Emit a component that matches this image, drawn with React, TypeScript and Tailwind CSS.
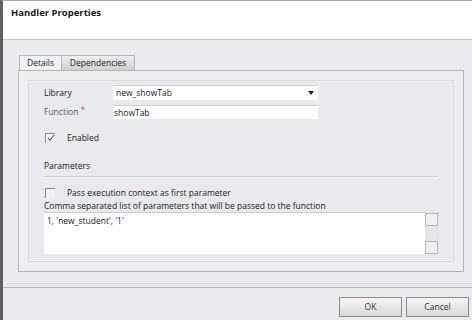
const font = { fontFamily: '"Open Sans", "Noto Sans", sans-serif' };

const Check = ({ checked }: { checked?: boolean }) => (
  <div className="w-[10px] h-[10px] border-l border-t border-[#8a8a8a] bg-[#f3f3f3] flex items-center justify-center">
    {checked && (
      <svg width="8" height="8" viewBox="0 0 8 8">
        <path d="M1 4 L3 6.5 L7 1" fill="none" stroke="#333" strokeWidth="1" />
      </svg>
    )}
  </div>
);

export default function App() {
  return (
    <div
      className="w-[472px] h-[320px] flex flex-col bg-[#e9ebee] border-l-[3px] border-l-[#5f5f5f] border-t border-t-[#a5a5a5] text-[8.5px] leading-[12px] text-[#222]"
      style={font}
    >
      {/* Header */}
      <div className="h-[39px] shrink-0 bg-white border-b border-[#c5c8cc] pl-[8px] pt-[5px]">
        <span className="text-[9.5px] leading-[13px] font-bold text-[#1a1a1a]">Handler Properties</span>
      </div>

      {/* Body */}
      <div className="flex flex-col pl-[15px] pr-[8px] pt-[15px]">
        {/* Tabs */}
        <div className="flex h-[15px] ml-[1px]">
          <div className="w-[43px] h-[15px] bg-[#f1f2f4] border border-b-0 border-[#b4b7bb] flex items-center justify-center">
            Details
          </div>
          <div className="w-[73px] h-[15px] bg-gradient-to-b from-[#f0f0f0] to-[#cfd0d2] border border-l-0 border-b-0 border-[#b4b7bb] flex items-center justify-center">
            Dependencies
          </div>
        </div>

        {/* Panel */}
        <div className="h-[202px] border border-[#b1b4b8] bg-[#eceef0] p-[9px]">
          <div className="h-full border border-[#d8dbde] bg-[#e8eaed] pl-[15px] pr-[14px] flex flex-col">
            <div className="flex items-center mt-[4px] h-[15px]">
              <span className="w-[69px]">Library</span>
              <div className="w-[205px] h-[15px] bg-white border-t border-[#cfd1d4] flex items-center justify-between pl-[3px] pr-[4px]">
                <span>new_showTab</span>
                <svg width="6" height="4" viewBox="0 0 6 4">
                  <path d="M0 0 H6 L3 4 Z" fill="#222" />
                </svg>
              </div>
            </div>
            <div className="flex items-center mt-[5px] h-[14px]">
              <span className="w-[69px] text-[#5a5a5a]">
                Function<span className="text-[#c8507a] ml-[2px] relative top-[-2px]">*</span>
              </span>
              <div className="w-[205px] h-[14px] bg-white border-t border-[#cfd1d4] flex items-center pl-[1px]">
                showTab
              </div>
            </div>
            <div className="flex items-center mt-[13px] h-[11px] pl-[1px]">
              <Check checked />
              <span className="ml-[12px]">Enabled</span>
            </div>
            <div className="mt-[17px] h-[12px]">Parameters</div>
            <div className="mt-[4px] border-t border-[#c9ccd0] border-b border-b-[#f5f6f7] w-[394px]" />
            <div className="flex items-center mt-[9px] h-[11px] pl-[1px]">
              <Check />
              <span className="ml-[12px]">Pass execution context as first parameter</span>
            </div>
            <div className="mt-[1px] leading-[13px]">
              Comma separated list of parameters that will be passed to the function
            </div>
            <div className="flex h-[42px]">
              <div className="flex-1 bg-white border-t border-[#c8cacd] pl-[3px] pt-[2px]">
                1, 'new_student', '1'
              </div>
              <div className="w-[14px] bg-[#e4e6e9] flex flex-col justify-between pt-[1px]">
                <div className="w-[13px] h-[13px] border border-[#b8b8b8] bg-[#eef0f2]" />
                <div className="w-[13px] h-[13px] border border-[#b8b8b8] bg-[#eef0f2]" />
              </div>
            </div>
          </div>
        </div>
      </div>

      {/* Separator */}
      <div className="mt-[11px] ml-[4px] border-t border-[#d4d6d9]" />
      <div className="mt-[3px] border-t border-[#b3b6ba]" />

      {/* Footer */}
      <div className="flex justify-end gap-[4px] pr-[3px] mt-[9px]">
        <button className="w-[63px] h-[20px] border border-[#8c8c8c] bg-gradient-to-b from-[#f6f6f6] to-[#d9d9d9] text-[8.5px] text-[#333]">
          OK
        </button>
        <button className="w-[63px] h-[20px] border border-[#8c8c8c] bg-gradient-to-b from-[#f6f6f6] to-[#d9d9d9] text-[8.5px] text-[#333]">
          Cancel
        </button>
      </div>
    </div>
  );
}
